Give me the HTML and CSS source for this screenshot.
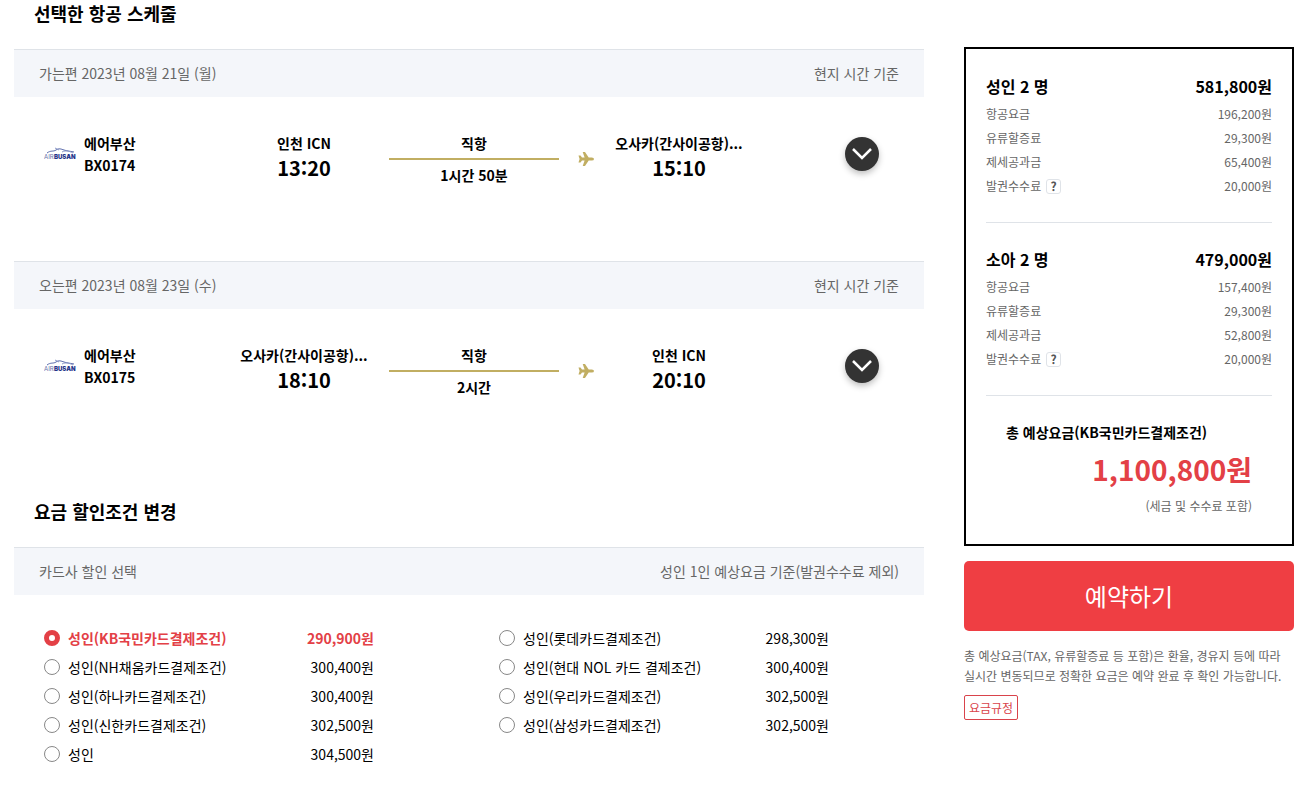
FILE: index.html
```
<!DOCTYPE html>
<html lang="ko">
	<head>
		<meta charset="utf-8">
		<title>항공 예약</title>
		<link rel="stylesheet" href="styles.css">
	</head>
	<body>
		<div class="page">
			<main class="main">
				<h2 class="title">선택한 항공 스케줄</h2>
				<section>
					<div class="bar">
						<span>가는편 2023년 08월 21일 (월)</span>
						<span>현지 시간 기준</span>
					</div>
					<div class="flight">
						<div class="airline">
							<svg class="logo" viewBox="0 0 32 14">
								<path d="M3 6C7 3 9 5 12 3S17 2 20 3S25 4 30 5" fill="none" stroke="#5a6bab" />
								<path d="M11 1L15 3M18 5C22 3 25 4 29 6" fill="none" stroke="#8b98c6" />
								<text x="0" y="12" font-size="6" fill="#6570a8">AIR</text>
								<text x="10" y="12" font-size="6" font-weight="900" fill="#26358a">BUSAN</text>
							</svg>
							<div>에어부산<br>BX0174</div>
						</div>
						<div class="stop">
							<div>인천 ICN</div>
							<div class="time">13:20</div>
						</div>
						<div class="route">
							<div class="direct">직항</div>
							<div>1시간 50분</div>
						</div>
						<svg class="plane" viewBox="0 0 16 16">
							<path d="M16 8Q16 9.600 13.800 9.600H10.700L7 15H4.700L6.600 9.600H4L2.500 11.500H.5L1.600 8L.5 4.500H2.500L4 6.400H6.600L4.700 1H7L10.700 6.400H13.800Q16 6.400 16 8Z" fill="#c1ae62" />
						</svg>
						<div class="stop">
							<div>오사카(간사이공항)...</div>
							<div class="time">15:10</div>
						</div>
						<button class="more" type="button" aria-label="가는편 상세">
							<svg viewBox="0 0 20 12">
								<path d="M1 1L10 10L19 1" fill="none" stroke="#fff" stroke-width="2.500" />
							</svg>
						</button>
					</div>
				</section>
				<section>
					<div class="bar">
						<span>오는편 2023년 08월 23일 (수)</span>
						<span>현지 시간 기준</span>
					</div>
					<div class="flight">
						<div class="airline">
							<svg class="logo" viewBox="0 0 32 14">
								<path d="M3 6C7 3 9 5 12 3S17 2 20 3S25 4 30 5" fill="none" stroke="#5a6bab" />
								<path d="M11 1L15 3M18 5C22 3 25 4 29 6" fill="none" stroke="#8b98c6" />
								<text x="0" y="12" font-size="6" fill="#6570a8">AIR</text>
								<text x="10" y="12" font-size="6" font-weight="900" fill="#26358a">BUSAN</text>
							</svg>
							<div>에어부산<br>BX0175</div>
						</div>
						<div class="stop">
							<div>오사카(간사이공항)...</div>
							<div class="time">18:10</div>
						</div>
						<div class="route">
							<div class="direct">직항</div>
							<div>2시간</div>
						</div>
						<svg class="plane" viewBox="0 0 16 16">
							<path d="M16 8Q16 9.600 13.800 9.600H10.700L7 15H4.700L6.600 9.600H4L2.500 11.500H.5L1.600 8L.5 4.500H2.500L4 6.400H6.600L4.700 1H7L10.700 6.400H13.800Q16 6.400 16 8Z" fill="#c1ae62" />
						</svg>
						<div class="stop">
							<div>인천 ICN</div>
							<div class="time">20:10</div>
						</div>
						<button class="more" type="button" aria-label="오는편 상세">
							<svg viewBox="0 0 20 12">
								<path d="M1 1L10 10L19 1" fill="none" stroke="#fff" stroke-width="2.500" />
							</svg>
						</button>
					</div>
				</section>

				<h2 class="title second">요금 할인조건 변경</h2>
				<section>
					<div class="bar">
						<span>카드사 할인 선택</span>
						<span>성인 1인 예상요금 기준(발권수수료 제외)</span>
					</div>
					<div class="cards">
						<label class="card"><input type="radio" name="card" checked><span>성인(KB국민카드결제조건)</span><span class="price">290,900원</span></label>
						<label class="card"><input type="radio" name="card"><span>성인(롯데카드결제조건)</span><span class="price">298,300원</span></label>
						<label class="card"><input type="radio" name="card"><span>성인(NH채움카드결제조건)</span><span class="price">300,400원</span></label>
						<label class="card"><input type="radio" name="card"><span>성인(현대 NOL 카드 결제조건)</span><span class="price">300,400원</span></label>
						<label class="card"><input type="radio" name="card"><span>성인(하나카드결제조건)</span><span class="price">300,400원</span></label>
						<label class="card"><input type="radio" name="card"><span>성인(우리카드결제조건)</span><span class="price">302,500원</span></label>
						<label class="card"><input type="radio" name="card"><span>성인(신한카드결제조건)</span><span class="price">302,500원</span></label>
						<label class="card"><input type="radio" name="card"><span>성인(삼성카드결제조건)</span><span class="price">302,500원</span></label>
						<label class="card"><input type="radio" name="card"><span>성인</span><span class="price">304,500원</span></label>
					</div>
				</section>
			</main>

			<aside class="side">
				<div class="summary">
					<div class="group">
						<div class="row head"><span>성인 2 명</span><span>581,800원</span></div>
						<div class="row"><span>항공요금</span><span>196,200원</span></div>
						<div class="row"><span>유류할증료</span><span>29,300원</span></div>
						<div class="row"><span>제세공과금</span><span>65,400원</span></div>
						<div class="row">
							<span class="fee">발권수수료 <button class="help" type="button">?</button></span>
							<span>20,000원</span>
						</div>
					</div>
					<div class="group">
						<div class="row head"><span>소아 2 명</span><span>479,000원</span></div>
						<div class="row"><span>항공요금</span><span>157,400원</span></div>
						<div class="row"><span>유류할증료</span><span>29,300원</span></div>
						<div class="row"><span>제세공과금</span><span>52,800원</span></div>
						<div class="row">
							<span class="fee">발권수수료 <button class="help" type="button">?</button></span>
							<span>20,000원</span>
						</div>
					</div>
					<div class="total">
						<div class="total-title">총 예상요금(KB국민카드결제조건)</div>
						<div class="amount">1,100,800원</div>
						<div class="note">(세금 및 수수료 포함)</div>
					</div>
				</div>
				<button class="reserve" type="button">예약하기</button>
				<p class="guide">총 예상요금(TAX, 유류할증료 등 포함)은 환율, 경유지 등에 따라 실시간 변동되므로 정확한 요금은 예약 완료 후 확인 가능합니다.</p>
				<a class="rule" href="#">요금규정</a>
			</aside>
		</div>
	</body>
</html>
```
FILE: styles.css
```
* {
	box-sizing: border-box;
}
body {
	margin: 0;
	background: #fff;
	color: #000;
	font-family: "Noto Sans CJK KR", sans-serif;
	font-size: 14px;
	line-height: 22px;
}
button {
	font-family: inherit;
	padding: 0;
	border: none;
	cursor: pointer;
}
.page {
	display: flex;
	align-items: flex-start;
	gap: 40px;
	padding: 0 15px 0 14px;
}
.main {
	flex: 1;
}
.title {
	margin: 0 20px 22px;
	font-size: 18px;
	font-weight: 700;
	line-height: 27px;
}
.second {
	margin-top: 25px;
}
.bar {
	display: flex;
	justify-content: space-between;
	padding: 0 25px;
	border-top: 1px solid #dfe3e8;
	background: #f4f6fa;
	color: #666;
	line-height: 47px;
}

/* flight schedule */
.flight {
	display: grid;
	grid-template-columns: 205fr 170fr 170fr 54fr 132fr 179fr;
	align-items: start;
	padding: 35px 0 75px;
	font-weight: 700;
	white-space: nowrap;
}
.airline {
	display: flex;
	align-items: center;
	gap: 8px;
	padding-left: 30px;
}
.logo {
	width: 32px;
	height: 14px;
	font-family: Inter, sans-serif;
	font-weight: 400;
}
.stop,
.route {
	display: flex;
	flex-direction: column;
	align-items: center;
}
.time {
	font-size: 20px;
	line-height: 28px;
}
.direct {
	align-self: stretch;
	margin-bottom: 4px;
	padding-bottom: 4px;
	border-bottom: 2px solid #c1ae62;
	text-align: center;
}
.plane {
	justify-self: center;
	width: 16px;
	height: 16px;
	margin-top: 19px;
}
.more {
	display: flex;
	justify-self: end;
	align-items: center;
	justify-content: center;
	width: 34px;
	height: 34px;
	margin: 5px 45px 0 0;
	border-radius: 50%;
	background: #333;
	box-shadow: 0 3px 6px rgba(0, 0, 0, 0.25);
}
.more svg {
	width: 20px;
	height: 12px;
}

/* card discounts */
.cards {
	display: grid;
	grid-template-columns: 1fr 1fr;
	padding-top: 28px;
}
.card {
	display: flex;
	align-items: center;
	gap: 8px;
	height: 29px;
	padding: 0 95px 0 30px;
	line-height: 20px;
}
.card input {
	appearance: none;
	width: 16px;
	height: 16px;
	margin: 0;
	border: 1px solid #888;
	border-radius: 50%;
	background: #fff;
}
.card input:checked {
	border: 5px solid #e34046;
}
.card:has(input:checked) {
	color: #e34046;
	font-weight: 700;
}
.price {
	margin-left: auto;
}

/* fare summary */
.side {
	width: 330px;
	padding-top: 47px;
	font-size: 12px;
}
.summary {
	padding: 25px 20px 0;
	border: 2px solid #000;
}
.group {
	margin-bottom: 24px;
	padding-bottom: 24px;
	border-bottom: 1px solid #dfe3e8;
}
.row {
	display: flex;
	justify-content: space-between;
	color: #666;
	line-height: 24px;
}
.head {
	padding-bottom: 3px;
	color: #000;
	font-size: 16px;
	font-weight: 700;
	line-height: 25px;
}
.fee {
	display: flex;
	align-items: center;
	gap: 5px;
}
.help {
	width: 15px;
	height: 15px;
	border: 1px solid #dfe3e8;
	border-radius: 3px;
	background: #fff;
	color: #555;
	font-size: 12px;
	font-weight: 700;
	line-height: 12px;
}
.total {
	padding: 0 20px 26px;
	line-height: 24px;
	text-align: right;
}
.total-title {
	font-size: 14px;
	font-weight: 700;
	text-align: left;
}
.amount {
	color: #e34046;
	font-size: 28px;
	font-weight: 700;
	line-height: 50px;
}
.note {
	color: #666;
}
.reserve {
	display: block;
	width: 100%;
	height: 70px;
	margin-top: 15px;
	padding-bottom: 2px;
	border-radius: 5px;
	background: #ef3e43;
	color: #fff;
	font-size: 24px;
}
.guide {
	margin: 15px 0 9px;
	color: #666;
	line-height: 20px;
}
.rule {
	display: inline-block;
	padding: 0 4px;
	border: 1px solid #d9434b;
	border-radius: 2px;
	color: #d9434b;
	line-height: 23px;
	text-decoration: none;
}
```
